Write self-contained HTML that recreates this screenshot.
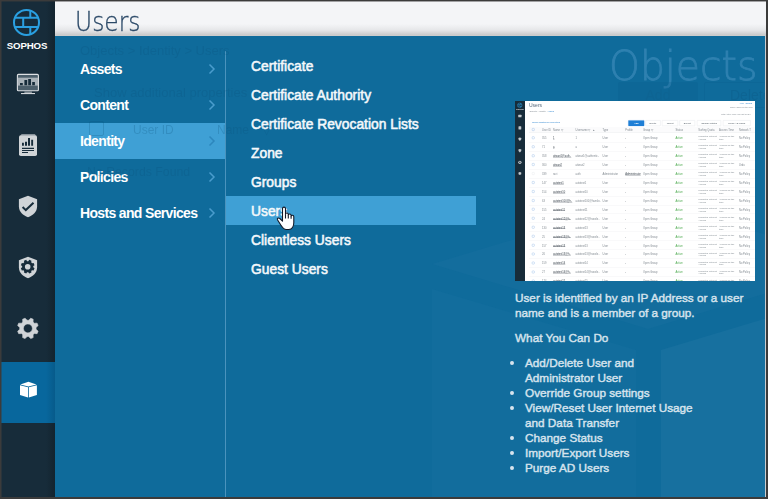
<!DOCTYPE html>
<html lang="en">
<head>
<meta charset="utf-8">
<title>Users</title>
<style>
*{box-sizing:border-box;margin:0;padding:0}
html,body{width:768px;height:499px;overflow:hidden;background:#3b3b3b}
body{position:relative;font-family:"Liberation Sans",sans-serif;color:#fff}
.abs{position:absolute}
/* outer frame */
#frame{position:absolute;left:1px;top:1px;width:765px;height:496px;overflow:hidden;background:#0f6b9b}
#edgeR{position:absolute;left:765px;top:36px;width:1px;height:461px;background:#c9cdd0}
/* sidebar */
#side{position:absolute;left:0;top:0;width:54px;height:496px;background:linear-gradient(90deg,#172c3a 0,#172c3a 45px,#13242f 54px)}
#side .active{position:absolute;left:0;top:361px;width:54px;height:61px;background:linear-gradient(90deg,#08679d 0,#08679d 45px,#075b8b 54px)}
#sophos{position:absolute;left:-1px;top:39.6px;width:54px;text-align:center;font-weight:bold;font-size:9.7px;line-height:10px;letter-spacing:-0.15px;color:#fff}
/* header */
#head{position:absolute;left:54px;top:0;width:712px;height:35px;background:linear-gradient(180deg,#f4f5f7 0,#f4f5f7 23px,#e6e7e9 29px,#c6c7c8 34.4px,#e9e4e2 35px)}
#head h1{position:absolute;left:20px;top:6px;font-family:"DejaVu Sans Light","DejaVu Sans","Liberation Sans",sans-serif;font-weight:200;font-size:26px;line-height:30px;color:#2c4a68;-webkit-text-stroke:.3px #2c4a68;transform:scaleX(.9);transform-origin:0 0;white-space:nowrap}
/* flyout panel */
#panel{position:absolute;left:54px;top:35px;width:710px;height:461px;background:#0f6b9b;overflow:hidden}
.ghost{position:absolute;color:#0a4f78;opacity:.22;white-space:nowrap;font-size:13px;line-height:16px}
#divider{position:absolute;left:170px;top:15px;width:1px;height:446px;background:#4a93bd}
/* level 1 */
#l1{position:absolute;left:0;top:15px;width:170px;list-style:none}
#l1 li{position:relative;height:36px;line-height:36.4px;padding-left:25px;font-weight:bold;font-size:14px;letter-spacing:-0.66px;color:#fff;white-space:nowrap}
#l1 li.on{background:#3fa0d5}
#l1 li svg{position:absolute;left:153px;top:12px}
/* level 2 */
#l2{position:absolute;left:171px;top:15px;width:250px;list-style:none}
#l2 li{height:29px;line-height:32px;padding-left:25px;font-weight:normal;font-size:13.8px;letter-spacing:0.02px;-webkit-text-stroke:.55px #f4f8fb;color:#f4f8fb;white-space:nowrap}
#l2 li.on{background:#3fa0d5;height:28.5px}
/* right pane */
#objects{position:absolute;left:554px;top:6px;font-family:"DejaVu Sans Light","DejaVu Sans","Liberation Sans",sans-serif;font-weight:200;font-size:40.5px;line-height:48px;color:#2f81b0;-webkit-text-stroke:.8px #2f81b0;white-space:nowrap;transform:scaleX(.97);transform-origin:0 0}
#desc{position:absolute;left:460px;top:254px;width:250px;white-space:nowrap;font-size:11.76px;line-height:15px;color:#d6e3ed;font-weight:normal;-webkit-text-stroke:.42px #d6e3ed}
#desc p{margin-bottom:10.4px}
#desc p+p{margin-bottom:9.4px}
#desc ul{list-style:none;margin-top:0}
#desc li{position:relative;padding-left:10px}
#desc li:before{content:"";position:absolute;left:-5px;top:6px;width:3.8px;height:3.8px;border-radius:50%;background:#d6e3ed}

#thumb{position:absolute;left:460px;top:65px;width:240px;height:180px;overflow:hidden;filter:blur(.35px)}
#tin{position:absolute;left:0;top:0;width:960px;height:720px;transform:scale(.25);transform-origin:0 0;background:#fff;color:#838b92;font-size:10.5px;line-height:12px;font-weight:normal;overflow:hidden}
#tin .sb{position:absolute;left:0;top:0;width:40px;height:720px;background:#172c3a}
#tin .t{position:absolute;white-space:nowrap}
#tin .bl{color:#2f86d0}
#tin .btn{position:absolute;top:77px;height:23px;border:1px solid #cfd4d9;border-radius:2px;text-align:center;line-height:21px;font-size:9.5px;color:#4b5660;background:#fff}
#tin .hr{position:absolute;left:56px;top:104px;width:904px;height:24px;background:#fbfbfc;border-bottom:1.5px solid #dde0e4}
#tin .r{position:absolute;left:56px;width:904px;height:36px;border-bottom:1px solid #e4e6e9}
#tin .r .t{top:12px}
#tin .r .t2{top:6px;font-size:9.5px;line-height:11px;white-space:normal;width:80px}
#tin .cb{position:absolute;left:12px;top:12px;width:10px;height:10px;border:1.5px solid #4f8fd6;border-radius:3px}
#tin .nm{color:#39434d;text-decoration:underline}
#tin .gr{color:#49a84b}
</style>
</head>
<body>
<div id="frame">

  <!-- header -->
  <div id="head"><h1>Users</h1></div>

  <!-- flyout panel -->
  <div id="panel">
    <!-- watermark cube -->
    <svg class="abs" style="left:0;top:0" width="710" height="461" viewBox="54 35 710 461">
      <polygon points="431,263 647,198 863,263 647,328" fill="#136d9d"/>
      <polygon points="431,288 635,349 635,700 431,700" fill="#126d9d"/>
      <polygon points="660,349 863,288 863,700 660,700" fill="#17709f"/>
    </svg>

    <div id="objects">Objects</div>

    <ul id="l1">
      <li>Assets<svg width="8" height="12" viewBox="0 0 8 12"><path d="M1.5 1.5 L6 6 L1.5 10.5" fill="none" stroke="#4a9ccd" stroke-width="1.5"/></svg></li>
      <li>Content<svg width="8" height="12" viewBox="0 0 8 12"><path d="M1.5 1.5 L6 6 L1.5 10.5" fill="none" stroke="#4a9ccd" stroke-width="1.5"/></svg></li>
      <li class="on">Identity<svg width="8" height="12" viewBox="0 0 8 12"><path d="M1.5 1.5 L6 6 L1.5 10.5" fill="none" stroke="#2d87bd" stroke-width="1.5"/></svg></li>
      <li>Policies<svg width="8" height="12" viewBox="0 0 8 12"><path d="M1.5 1.5 L6 6 L1.5 10.5" fill="none" stroke="#4a9ccd" stroke-width="1.5"/></svg></li>
      <li>Hosts and Services<svg width="8" height="12" viewBox="0 0 8 12"><path d="M1.5 1.5 L6 6 L1.5 10.5" fill="none" stroke="#4a9ccd" stroke-width="1.5"/></svg></li>
    </ul>
    <div id="divider"></div>
    <ul id="l2">
      <li>Certificate</li>
      <li>Certificate Authority</li>
      <li>Certificate Revocation Lists</li>
      <li>Zone</li>
      <li>Groups</li>
      <li class="on">Users</li>
      <li>Clientless Users</li>
      <li>Guest Users</li>
    </ul>

    <!-- faint page content showing through -->
    <div class="ghost" style="left:25px;top:7px">Objects &gt; Identity &gt; Users</div>
    <div class="ghost" style="left:39px;top:49px">Show additional properties</div>
    <div class="ghost" style="left:34px;top:84.500px;width:15px;height:15px;border:1px solid #0a4f78;border-radius:2px"></div>
    <div class="ghost" style="left:78px;top:86px;font-size:12px">User ID</div>
    <div class="ghost" style="left:162px;top:86px;font-size:12px">Name &nbsp; &nbsp;&#9661;</div>
    <div class="ghost" style="left:32px;top:128px;font-size:12.3px">No Records Found</div>
    <div class="ghost" style="left:563px;top:46px;width:80px;height:26px;background:#0a5a8a;border-radius:2px;text-align:center;line-height:27px;font-size:14px">Add</div>
    <div class="ghost" style="left:649px;top:46px;width:80px;height:26px;border:1px solid #0a5a8a;border-radius:2px;line-height:25px;font-size:14px;padding-left:25px">Delete</div>

    <div id="thumb"><div id="tin">
<div class="sb">
<svg class="abs" style="left:0;top:0" width="40" height="320" viewBox="0 0 40 320"><g fill="none" stroke="#2a9fe0" stroke-width="1.8"><circle cx="19" cy="17" r="9"/><path d="M10.500 13.500H27.500M10.500 20.500H27.500M22 8.500V13.500M16.500 13.500V20.500M22 20.500V25.500"/></g><g fill="#c3c9ce"><rect x="13" y="55" width="13" height="10" rx="1.500"/><rect x="14" y="101" width="11" height="13" rx="2"/><path d="M19.500 146l6 2.300c0 5-1.500 9-6 11.500c-4.500-2.500-6-6.500-6-11.500z"/><path d="M19.500 192l6 2.300c0 5-1.500 9-6 11.500c-4.500-2.500-6-6.500-6-11.500z"/><circle cx="19.500" cy="245" r="6.500"/><path d="M19.500 284l5.500 2.300v7l-5.500 2.500l-5.500-2.500v-7z"/></g><circle cx="19.500" cy="245" r="2.800" fill="#172c3a"/></svg>
<div class="t" style="left:0;top:29px;width:40px;text-align:center;font-size:7px;font-weight:bold;color:#fff">SOPHOS</div>
</div>
<div class="t" style="left:56px;top:4px;font-size:20px;line-height:26px;color:#55687b">Users</div>
<div class="t" style="left:58px;top:33px;font-size:8.500px">Objects &gt; Identity &gt; <span class="bl">Users</span></div>
<div class="t bl" style="right:10px;top:5px;font-size:8px">Help &nbsp; admin &#9662;</div>
<div class="t" style="right:10px;top:18px;font-size:8px">Cisco Hansel Textile Mills</div>
<div class="t" style="right:18px;top:47px;font-size:8px">Total Active User: 324 Out of 324</div>
<div class="t bl" style="left:68px;top:80px;font-size:9.500px">Show additional properties</div>
<div class="btn" style="left:453px;width:64px;background:#1f7fd6;border-color:#1f7fd6;color:#fff;font-weight:bold">Add</div>
<div class="btn" style="left:522px;width:60px">Delete</div>
<div class="btn" style="left:588px;width:64px">Import</div>
<div class="btn" style="left:658px;width:62px">Export</div>
<div class="btn" style="left:728px;width:96px">Change Status</div>
<div class="btn" style="left:832px;width:110px">Purge AD Users</div>
<div class="hr"><div class="cb" style="top:5px"></div>
<div class="t" style="left:52px;top:5px">User ID</div>
<div class="t" style="left:96px;top:5px">Name &#9661;</div>
<div class="t" style="left:186px;top:5px">Username &#9661; &nbsp; &nbsp;&#9652;</div>
<div class="t" style="left:294px;top:5px">Type</div>
<div class="t" style="left:385px;top:5px">Profile</div>
<div class="t" style="left:456px;top:5px">Group &#9661;</div>
<div class="t" style="left:586px;top:5px">Status</div>
<div class="t" style="left:677px;top:5px">Surfing Quota</div>
<div class="t" style="left:760px;top:5px">Access Time</div>
<div class="t" style="left:840px;top:5px">Network T</div>
</div>
<div class="r" style="top:130.0px">
<div class="cb"></div>
<div class="t" style="left:52px">355</div>
<div class="t nm" style="left:96px">1</div>
<div class="t" style="left:186px">1</div>
<div class="t" style="left:294px">User</div>
<div class="t " style="left:385px">-</div>
<div class="t" style="left:456px">Open Group</div>
<div class="t gr" style="left:586px">Active</div>
<div class="t t2" style="left:677px">Unlimited Internet Access</div>
<div class="t t2" style="left:760px;width:70px">Allowed all the time</div>
<div class="t" style="left:840px">No Policy</div>
</div>
<div class="r" style="top:165.8px">
<div class="cb"></div>
<div class="t" style="left:52px">71</div>
<div class="t nm" style="left:96px">a</div>
<div class="t" style="left:186px">a</div>
<div class="t" style="left:294px">User</div>
<div class="t " style="left:385px">-</div>
<div class="t" style="left:456px">Open Group</div>
<div class="t gr" style="left:586px">Active</div>
<div class="t t2" style="left:677px">Unlimited Internet Access</div>
<div class="t t2" style="left:760px;width:70px">Allowed all the time</div>
<div class="t" style="left:840px">No Policy</div>
</div>
<div class="r" style="top:201.6px">
<div class="cb"></div>
<div class="t" style="left:52px">358</div>
<div class="t nm" style="left:96px">atiwari1@auth..</div>
<div class="t" style="left:186px">atiwari1@authentic..</div>
<div class="t" style="left:294px">User</div>
<div class="t " style="left:385px">-</div>
<div class="t" style="left:456px">Open Group</div>
<div class="t gr" style="left:586px">Active</div>
<div class="t t2" style="left:677px">Unlimited Internet Access</div>
<div class="t t2" style="left:760px;width:70px">Allowed all the time</div>
<div class="t" style="left:840px">No Policy</div>
</div>
<div class="r" style="top:237.4px">
<div class="cb"></div>
<div class="t" style="left:52px">360</div>
<div class="t nm" style="left:96px">atiwari2</div>
<div class="t" style="left:186px">atiwari2</div>
<div class="t" style="left:294px">User</div>
<div class="t " style="left:385px">-</div>
<div class="t" style="left:456px">Open Group</div>
<div class="t gr" style="left:586px">Active</div>
<div class="t t2" style="left:677px">Unlimited Internet Access</div>
<div class="t t2" style="left:760px;width:70px">Allowed all the time</div>
<div class="t" style="left:840px">Urdu</div>
</div>
<div class="r" style="top:273.2px">
<div class="cb" style="border-color:#d5d9dd"></div>
<div class="t" style="left:52px">339</div>
<div class="t " style="left:96px">ravi</div>
<div class="t" style="left:186px">auth</div>
<div class="t" style="left:294px">Administrator</div>
<div class="t nm" style="left:385px">Administrator</div>
<div class="t" style="left:456px">Open Group</div>
<div class="t gr" style="left:586px">Active</div>
<div class="t t2" style="left:677px">Unlimited Internet Access</div>
<div class="t t2" style="left:760px;width:70px">Allowed all the time</div>
<div class="t" style="left:840px">No Policy</div>
</div>
<div class="r" style="top:309.0px">
<div class="cb"></div>
<div class="t" style="left:52px">147</div>
<div class="t nm" style="left:96px">autotest1</div>
<div class="t" style="left:186px">autotest1</div>
<div class="t" style="left:294px">User</div>
<div class="t " style="left:385px">-</div>
<div class="t" style="left:456px">Open Group</div>
<div class="t gr" style="left:586px">Active</div>
<div class="t t2" style="left:677px">Unlimited Internet Access</div>
<div class="t t2" style="left:760px;width:70px">Allowed all the time</div>
<div class="t" style="left:840px">No Policy</div>
</div>
<div class="r" style="top:344.8px">
<div class="cb"></div>
<div class="t" style="left:52px">154</div>
<div class="t nm" style="left:96px">autotest10</div>
<div class="t" style="left:186px">autotest10</div>
<div class="t" style="left:294px">User</div>
<div class="t " style="left:385px">-</div>
<div class="t" style="left:456px">Open Group</div>
<div class="t gr" style="left:586px">Active</div>
<div class="t t2" style="left:677px">Unlimited Internet Access</div>
<div class="t t2" style="left:760px;width:70px">Allowed all the time</div>
<div class="t" style="left:840px">No Policy</div>
</div>
<div class="r" style="top:380.6px">
<div class="cb"></div>
<div class="t" style="left:52px">63</div>
<div class="t nm" style="left:96px">autotest100@h..</div>
<div class="t" style="left:186px">autotest100@hansle..</div>
<div class="t" style="left:294px">User</div>
<div class="t " style="left:385px">-</div>
<div class="t" style="left:456px">Open Group</div>
<div class="t gr" style="left:586px">Active</div>
<div class="t t2" style="left:677px">Unlimited Internet Access</div>
<div class="t t2" style="left:760px;width:70px">Allowed all the time</div>
<div class="t" style="left:840px">No Policy</div>
</div>
<div class="r" style="top:416.4px">
<div class="cb"></div>
<div class="t" style="left:52px">155</div>
<div class="t nm" style="left:96px">autotest11</div>
<div class="t" style="left:186px">autotest11</div>
<div class="t" style="left:294px">User</div>
<div class="t " style="left:385px">-</div>
<div class="t" style="left:456px">Open Group</div>
<div class="t gr" style="left:586px">Active</div>
<div class="t t2" style="left:677px">Unlimited Internet Access</div>
<div class="t t2" style="left:760px;width:70px">Allowed all the time</div>
<div class="t" style="left:840px">No Policy</div>
</div>
<div class="r" style="top:452.2px">
<div class="cb"></div>
<div class="t" style="left:52px">24</div>
<div class="t nm" style="left:96px">autotest12@h..</div>
<div class="t" style="left:186px">autotest12@hansle..</div>
<div class="t" style="left:294px">User</div>
<div class="t " style="left:385px">-</div>
<div class="t" style="left:456px">Open Group</div>
<div class="t gr" style="left:586px">Active</div>
<div class="t t2" style="left:677px">Unlimited Internet Access</div>
<div class="t t2" style="left:760px;width:70px">Allowed all the time</div>
<div class="t" style="left:840px">No Policy</div>
</div>
<div class="r" style="top:488.0px">
<div class="cb"></div>
<div class="t" style="left:52px">130</div>
<div class="t nm" style="left:96px">autotest13</div>
<div class="t" style="left:186px">autotest13</div>
<div class="t" style="left:294px">User</div>
<div class="t " style="left:385px">-</div>
<div class="t" style="left:456px">Open Group</div>
<div class="t gr" style="left:586px">Active</div>
<div class="t t2" style="left:677px">Unlimited Internet Access</div>
<div class="t t2" style="left:760px;width:70px">Allowed all the time</div>
<div class="t" style="left:840px">No Policy</div>
</div>
<div class="r" style="top:523.8px">
<div class="cb"></div>
<div class="t" style="left:52px">25</div>
<div class="t nm" style="left:96px">autotest13@h..</div>
<div class="t" style="left:186px">autotest13@hansle..</div>
<div class="t" style="left:294px">User</div>
<div class="t " style="left:385px">-</div>
<div class="t" style="left:456px">Open Group</div>
<div class="t gr" style="left:586px">Active</div>
<div class="t t2" style="left:677px">Unlimited Internet Access</div>
<div class="t t2" style="left:760px;width:70px">Allowed all the time</div>
<div class="t" style="left:840px">No Policy</div>
</div>
<div class="r" style="top:559.6px">
<div class="cb"></div>
<div class="t" style="left:52px">157</div>
<div class="t nm" style="left:96px">autotest13</div>
<div class="t" style="left:186px">autotest13</div>
<div class="t" style="left:294px">User</div>
<div class="t " style="left:385px">-</div>
<div class="t" style="left:456px">Open Group</div>
<div class="t gr" style="left:586px">Active</div>
<div class="t t2" style="left:677px">Unlimited Internet Access</div>
<div class="t t2" style="left:760px;width:70px">Allowed all the time</div>
<div class="t" style="left:840px">No Policy</div>
</div>
<div class="r" style="top:595.4px">
<div class="cb"></div>
<div class="t" style="left:52px">26</div>
<div class="t nm" style="left:96px">autotest13@h..</div>
<div class="t" style="left:186px">autotest13@hansle..</div>
<div class="t" style="left:294px">User</div>
<div class="t " style="left:385px">-</div>
<div class="t" style="left:456px">Open Group</div>
<div class="t gr" style="left:586px">Active</div>
<div class="t t2" style="left:677px">Unlimited Internet Access</div>
<div class="t t2" style="left:760px;width:70px">Allowed all the time</div>
<div class="t" style="left:840px">No Policy</div>
</div>
<div class="r" style="top:631.2px">
<div class="cb"></div>
<div class="t" style="left:52px">159</div>
<div class="t nm" style="left:96px">autotest14</div>
<div class="t" style="left:186px">autotest14</div>
<div class="t" style="left:294px">User</div>
<div class="t " style="left:385px">-</div>
<div class="t" style="left:456px">Open Group</div>
<div class="t gr" style="left:586px">Active</div>
<div class="t t2" style="left:677px">Unlimited Internet Access</div>
<div class="t t2" style="left:760px;width:70px">Allowed all the time</div>
<div class="t" style="left:840px">No Policy</div>
</div>
<div class="r" style="top:667.0px">
<div class="cb"></div>
<div class="t" style="left:52px">27</div>
<div class="t nm" style="left:96px">autotest14@h..</div>
<div class="t" style="left:186px">autotest14@hansle..</div>
<div class="t" style="left:294px">User</div>
<div class="t " style="left:385px">-</div>
<div class="t" style="left:456px">Open Group</div>
<div class="t gr" style="left:586px">Active</div>
<div class="t t2" style="left:677px">Unlimited Internet Access</div>
<div class="t t2" style="left:760px;width:70px">Allowed all the time</div>
<div class="t" style="left:840px">No Policy</div>
</div>
<div class="r" style="top:702.8px">
<div class="cb"></div>
<div class="t" style="left:52px">174</div>
<div class="t nm" style="left:96px">autotest15</div>
<div class="t" style="left:186px">autotest15</div>
<div class="t" style="left:294px">User</div>
<div class="t " style="left:385px">-</div>
<div class="t" style="left:456px">Open Group</div>
<div class="t gr" style="left:586px">Active</div>
<div class="t t2" style="left:677px">Unlimited Internet Access</div>
<div class="t t2" style="left:760px;width:70px">Allowed all the time</div>
<div class="t" style="left:840px">No Policy</div>
</div>
</div></div>

    <div id="desc">
      <p>User is identified by an IP Address or a user<br>name and is a member of a group.</p>
      <p>What You Can Do</p>
      <ul>
        <li>Add/Delete User and<br>Administrator User</li>
        <li>Override Group settings</li>
        <li>View/Reset User Internet Usage<br>and Data Transfer</li>
        <li>Change Status</li>
        <li>Import/Export Users</li>
        <li>Purge AD Users</li>
      </ul>
    </div>

    <svg class="abs" style="left:221.2px;top:170.4px" width="20" height="25" viewBox="0 0 20 25">
      <path d="M6.500 2.500 C6.500 0.600 9.500 0.600 9.500 2.500 L9.500 8.300 C9.500 6.600 12.300 6.600 12.300 8.500 L12.300 9.300 C12.300 7.600 15.100 7.600 15.100 9.500 L15.100 10.300 C15.100 8.800 17.800 8.800 17.800 10.700 L17.800 16.500 C17.800 20.500 15.800 23.500 12.800 23.500 L10.300 23.500 C7.800 23.500 6.300 21.500 4.800 19 L1.600 14 C0.800 12.500 2.300 11.400 3.800 12.500 L6.500 15.200 Z" fill="#fff" stroke="#111827" stroke-width="1.100" stroke-linejoin="round"/>
      <path d="M9.500 8.300 V12.500 M12.300 9.300 V12.500 M15.100 10.300 V12.800" fill="none" stroke="#111827" stroke-width="1.100"/>
    </svg>
  </div>

  <!-- sidebar -->
  <div id="side">
    <div class="active"></div>
    <svg class="abs" style="left:0;top:0" width="54" height="496" viewBox="1 1 54 496">
      <!-- Sophos firewall logo -->
      <g fill="none" stroke="#2a9fe0" stroke-width="2">
        <circle cx="26.5" cy="22.4" r="12.5"/>
        <path d="M15 17.7 H38 M15 27.1 H38 M30.3 10.5 V17.7 M23.2 17.7 V27.1 M30.3 27.1 V34.3"/>
      </g>
      <!-- monitor -->
      <g>
        <rect x="17.4" y="74.4" width="21" height="16.400" rx="1" fill="#4c5f6b" stroke="#dde0e3" stroke-width="1.100"/>
        <rect x="17.8" y="77.7" width="20.2" height="7.9" fill="#a9b2b8"/>
        <path d="M20 83h2.8v2.3H20z M24.4 80h2.8v5.3h-2.8z M28.2 79h2.8v6.3h-2.8z M32.2 82h2.7v3.3h-2.7z" fill="#172c3a"/>
        <rect x="24.4" y="91.4" width="7.5" height="1.6" fill="#87929a"/>
        <rect x="21" y="93" width="14" height="1.1" fill="#d3d7da"/>
      </g>
      <!-- report -->
      <g>
        <path d="M21.6 134 H34.8 L36 135.6 H20.4 Z" fill="#87929a"/>
        <rect x="19" y="135.3" width="18" height="20.8" rx="1.8" fill="#d0d4d7"/>
        <path d="M22 142.8h1.9v3H22z M25 141.8h2v4h-2z M28 138h2v7.8h-2z M31.2 139.8h1.9v6h-1.9z M22 147.8h12v1.1H22z M22 150h12v1H22z M22 152.1h6v1H22z" fill="#172c3a"/>
      </g>
      <!-- shield check -->
      <g>
        <path d="M28 195.700 L37.100 199.200 L37.100 206.300 C37.100 212.300 32.800 215.300 28 217.300 C23.200 215.300 18.900 212.300 18.900 206.300 L18.900 199.200 Z" fill="#d0d4d7"/>
        <path d="M22.600 207 L25.800 210.100 L33.500 202.800" fill="none" stroke="#172c3a" stroke-width="2"/>
      </g>
      <!-- shield gear -->
      <g>
        <path d="M28 256.700 L37.100 260.200 L37.100 267.300 C37.100 273.300 32.800 276.300 28 278.300 C23.200 276.300 18.900 273.300 18.900 267.300 L18.900 260.200 Z" fill="#d0d4d7"/>
        <path d="M33.27 267.31 L34.53 268.23 L33.61 270.45 L32.07 270.20 L31.20 271.07 L31.45 272.61 L29.23 273.53 L28.31 272.27 L27.09 272.27 L26.17 273.53 L23.95 272.61 L24.20 271.07 L23.33 270.20 L21.79 270.45 L20.87 268.23 L22.13 267.31 L22.13 266.09 L20.87 265.17 L21.79 262.95 L23.33 263.20 L24.20 262.33 L23.95 260.79 L26.17 259.87 L27.09 261.13 L28.31 261.13 L29.23 259.87 L31.45 260.79 L31.20 262.33 L32.07 263.20 L33.61 262.95 L34.53 265.17 L33.27 266.09Z" fill="#172c3a"/>
        <circle cx="27.700" cy="266.700" r="2.800" fill="#d0d4d7"/>
      </g>
      <!-- gear -->
      <g>
        <path fill-rule="evenodd" stroke="#d0d4d7" stroke-width=".6" stroke-linejoin="round" d="M36.06 329.24 L38.12 331.20 L37.11 333.65 L34.26 333.58 L33.08 334.76 L33.15 337.61 L30.70 338.62 L28.74 336.56 L27.06 336.56 L25.10 338.62 L22.65 337.61 L22.72 334.76 L21.54 333.58 L18.69 333.65 L17.68 331.20 L19.74 329.24 L19.74 327.56 L17.68 325.60 L18.69 323.15 L21.54 323.22 L22.72 322.04 L22.65 319.19 L25.10 318.18 L27.06 320.24 L28.74 320.24 L30.70 318.18 L33.15 319.19 L33.08 322.04 L34.26 323.22 L37.11 323.15 L38.12 325.60 L36.06 327.56Z M32.400 328.400 A4.500 4.500 0 1 0 23.400 328.400 A4.500 4.500 0 1 0 32.400 328.400Z" fill="#d0d4d7"/>
      </g>
      <!-- cube (active) -->
      <g fill="#fff">
        <path d="M28.400 381.800 L36.500 384.500 L28.400 386.500 L20.300 384.500 Z"/>
        <path d="M20 385.200 L28 387.200 L28 397.400 L20 394.900 Z"/>
        <path d="M36.900 385.200 L28.800 387.200 L28.800 397.400 L36.900 394.900 Z"/>
      </g>
    </svg>
    <div id="sophos">SOPHOS</div>
  </div>
</div>
<div id="edgeR"></div>
<div class="abs" style="left:1px;top:1px;width:1px;height:496px;background:rgba(59,59,59,.5)"></div>
<div class="abs" style="left:1px;top:1px;width:765px;height:1px;background:rgba(59,59,59,.45)"></div>
</body>
</html>
